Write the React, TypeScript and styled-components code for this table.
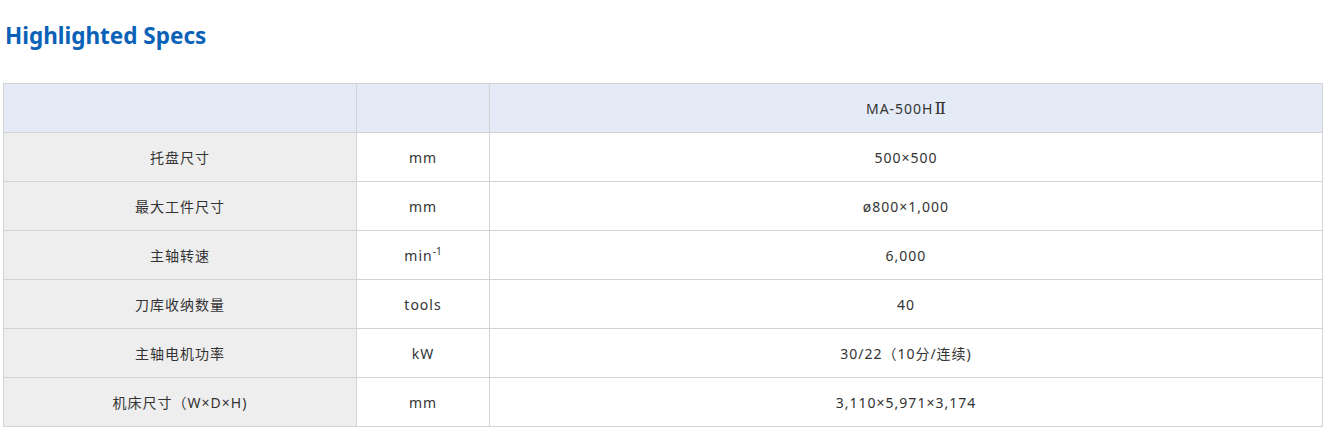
import React from "react";
import styled, { createGlobalStyle } from "styled-components";

const Global = createGlobalStyle`
  html, body { margin: 0; padding: 0; background: #ffffff; }
  body { font-family: "Noto Sans", "Noto Sans CJK SC", sans-serif; }
`;

const Page = styled.div`
  padding: 0 2px 0 3px;
`;

const Title = styled.h2`
  margin: 0;
  padding: 20px 0 0 2px;
  height: 83px;
  box-sizing: border-box;
  font-family: "Noto Sans", "Noto Sans CJK SC", sans-serif;
  font-size: 22.5px;
  font-weight: 700;
  line-height: 32px;
  color: #0a62b8;
`;

const Table = styled.table`
  width: 100%;
  border-collapse: collapse;
  table-layout: fixed;
  font-family: "Noto Sans", "Noto Sans CJK SC", sans-serif;
  font-size: 14px;
  letter-spacing: 1px;
  color: #333333;
`;

const Cell = styled.td<{ $tone?: "head" | "label" | "plain" }>`
  height: 49px;
  padding: 0;
  box-sizing: border-box;
  border: 1px solid #d3d3d3;
  text-align: center;
  vertical-align: middle;
  font-weight: 400;
  background: ${(p) =>
    p.$tone === "head" ? "#e4ebf7" : p.$tone === "label" ? "#eeeeee" : "#ffffff"};
`;

const Sup = styled.sup`
  font-size: 10px;
  vertical-align: 6px;
  line-height: 0;
  letter-spacing: 0;
`;

const Roman = styled.span`
  font-family: "DejaVu Serif", serif;
  font-size: 17px;
  line-height: 1;
  letter-spacing: 0;
  padding-left: 1px;
`;

type Row = { label: string; unit: React.ReactNode; value: string };

const rows: Row[] = [
  { label: "托盘尺寸", unit: "mm", value: "500×500" },
  { label: "最大工件尺寸", unit: "mm", value: "ø800×1,000" },
  { label: "主轴转速", unit: <>min<Sup>-1</Sup></>, value: "6,000" },
  { label: "刀库收纳数量", unit: "tools", value: "40" },
  { label: "主轴电机功率", unit: "kW", value: "30/22（10分/连续)" },
  { label: "机床尺寸（W×D×H)", unit: "mm", value: "3,110×5,971×3,174" },
];

export default function App() {
  return (
    <Page>
      <Global />
      <Title>Highlighted Specs</Title>
      <Table>
        <colgroup>
          <col style={{ width: 353 }} />
          <col style={{ width: 133 }} />
          <col />
        </colgroup>
        <thead>
          <tr>
            <Cell as="th" $tone="head" />
            <Cell as="th" $tone="head" />
            <Cell as="th" $tone="head">
              MA-500H<Roman>Ⅱ</Roman>
            </Cell>
          </tr>
        </thead>
        <tbody>
          {rows.map((r) => (
            <tr key={r.label}>
              <Cell $tone="label">{r.label}</Cell>
              <Cell>{r.unit}</Cell>
              <Cell>{r.value}</Cell>
            </tr>
          ))}
        </tbody>
      </Table>
    </Page>
  );
}
